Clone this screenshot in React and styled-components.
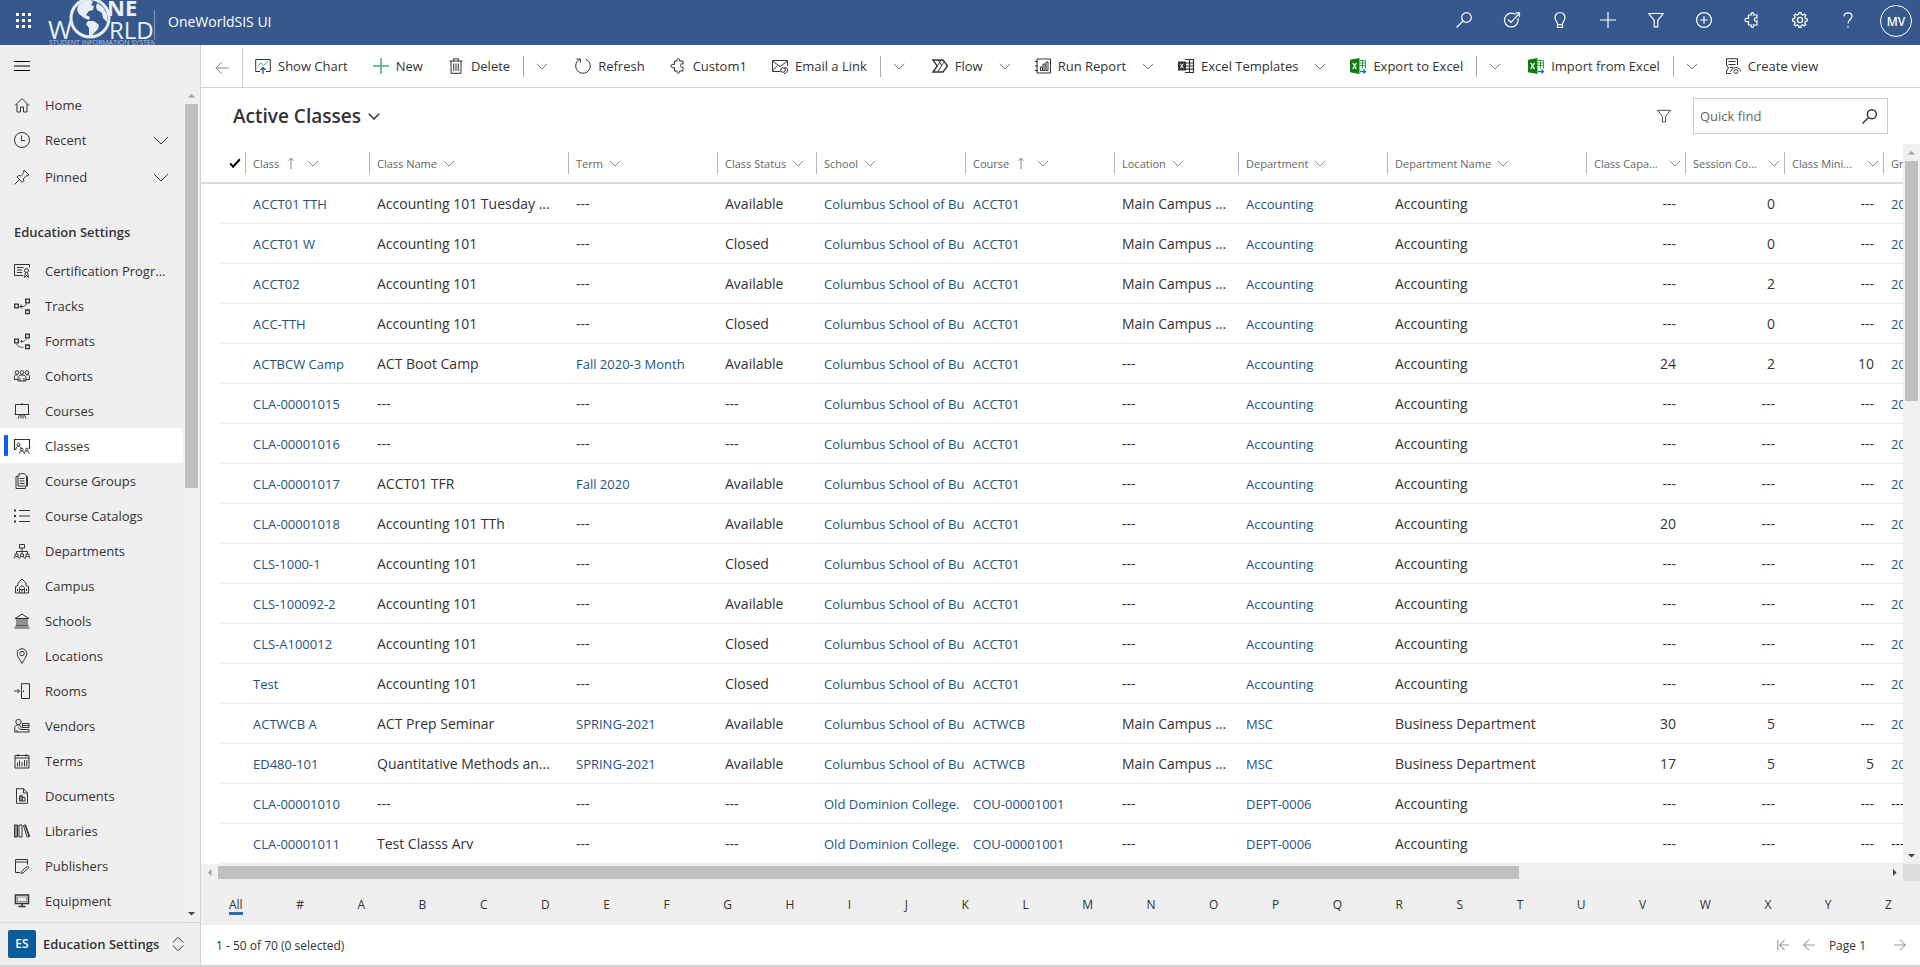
import React from "react";
import styled, { createGlobalStyle, css } from "styled-components";

const Global = createGlobalStyle`
  *, *::before, *::after { box-sizing: border-box; }
  html, body { margin: 0; height: 100%; }
  body {
    font-family: "Open Sans", "Noto Sans", sans-serif;
    font-size: 13px;
    color: #333;
    background: #fff;
  }
  #root { height: 100%; }
  button, input { font: inherit; color: inherit; }
  button { background: none; border: 0; padding: 0; cursor: pointer; }
  a { text-decoration: none; color: inherit; }
`;

/* ---------- icons ---------- */

const Svg = styled.svg`
  width: ${(p) => p.$size || 16}px;
  height: ${(p) => p.$size || 16}px;
  flex: none;
  fill: none;
  stroke: currentColor;
  stroke-width: ${(p) => p.$stroke || 1};
  overflow: visible;
`;

const shapes = {
  menu: <path d="M0 3.500h16M0 8h16M0 12.500h16" />,
  home: <path d="M1 8.500 8 1.500l7 7M3 7v8h3.500v-5h3v5H13V7" />,
  clock: <><circle cx="8" cy="8" r="7.500" /><path d="M7.500 3.500v5h3.500" /></>,
  pin: <path d="M10 1l5 5-1.500.8-1-.2-3 3 .2 2.400-1.400 1.400L3 8l1.400-1.400 2.400.2 3-3-.2-1zM5.500 10.500.5 15.500" />,
  certification: <><path d="M9 12.500H.5V1.500h15v3M3 4.500h6.500M3 7h5M3 9.500h5" /><circle cx="12.500" cy="7.500" r="2" /><path d="M11.500 9.500l-1 5 2-2 2 2-1-5" /></>,
  tracks: <><path d="M.7 6.200h3.600v3.600H.7zM11.700 1.200h3.600v3.600h-3.600zM11.700 12h3.600v3.600h-3.600z" strokeWidth="1.300" /><path d="M6 8.500h3.500c1.500 0 2-2 3.500-3M8 6.500l-2 2 2 2" /></>,
  formats: <><path d="M.7 6.200h3.600v3.600H.7zM11.700 1.200h3.600v3.600h-3.600zM11.700 12h3.600v3.600h-3.600z" strokeWidth="1.300" /><path d="M6.500 8.500h2.500c1.500 0 2-1.500 4-3M8 7l-1.500 1.500L8 10M2.500 11c1 2.500 3 3.500 7 3.300" strokeWidth=".8" /></>,
  cohorts: <><circle cx="3" cy="4.500" r="1.800" /><circle cx="8" cy="4.500" r="1.800" /><circle cx="13" cy="4.500" r="1.800" /><path d="M4 13V10c0-2 1.500-3 4-3s4 1 4 3v3zM.5 11.500V8.500C.5 7 1.500 6.700 4 6.800M15.500 11.500V8.500c0-1.500-1-1.800-3.500-1.700M.5 11.500H4M12 11.500h3.500M6 10v3M10 10v3" /></>,
  courses: <path d="M1.500 1.500h13v10h-13zM.5 11.500h15M8 0v1.500M5.500 12 4 15.500M10.500 12l1.500 3.500M7 12v3.500M9 12v3.500" />,
  classes: <><path d="M2 11.500H.5v-10h15v9.500" strokeWidth="1.200" /><circle cx="4.500" cy="6.500" r="1.500" /><path d="M2 11.500c0-2.500 1-3.500 2.500-3.500S7 9.500 7.500 11M5.500 15.500c0-1.800.8-2.700 2.200-2.700s2.300.9 2.300 2.700M10.500 15.500c0-1.800.8-2.700 2.200-2.700s2.300.9 2.300 2.700" /><circle cx="7.800" cy="11.500" r="1.300" /><circle cx="12.800" cy="11.500" r="1.300" /></>,
  groups: <><path d="M5 3.500V.7h5.500l2 2v9.800M3.500 3.500H2v12h9.500v-1.500M4 2.200v10.800h9.500V3.500" /><path d="M5.500 5.500h5M5.500 8h5M5.500 10.500h5" /></>,
  list: <><path d="M5 2.500h11M5 8h11M5 13.500h11" /><path d="M0 2.500h2M0 8h2M0 13.500h2" strokeWidth="2" /></>,
  departments: <><path d="M5.500 1.500h5v3.500h-5zM8 5v6M2.500 11V8.500h11V11" /><path d="M1 11h3v2.500H1zM6.500 11h3v2.500h-3zM12 11h3v2.500h-3zM0 15.500l1-2M5 15.500l-1-2M5.500 15.500l1-2M10.500 15.500l-1-2M11 15.500l1-2M16 15.500l-1-2" strokeWidth=".9" /></>,
  campus: <path d="M1.500 15V8.500L4 7.500V5l4-4 4 4v2.500l2.500 1V15zM5.500 15v-4.500C5.500 9 6.500 8 8 8s2.500 1 2.500 2.500V15M5.500 11.500h5M3.500 11v2M12.500 11v2M8 11.500V15" />,
  schools: <path d="M.5 15h15M1.500 13h13M1 5.500h14L8 1.200zM3 6v7M5 6v7M7 6v7M9 6v7M11 6v7M13 6v7" />,
  location: <><path d="M8 15.500C6 11.500 3.200 8.800 3.200 5.500a4.800 4.800 0 0 1 9.600 0C12.800 8.800 10 11.500 8 15.500z" /><circle cx="8" cy="5.500" r="2.200" /></>,
  rooms: <path d="M7.500.7h8v14.800h-8zM0 8h5.500M3.500 6l2 2-2 2M9.500 7.500v1.500" />,
  vendors: <><circle cx="4.500" cy="4" r="2.700" /><path d="M.8 14V9.500c0-1.500 1.200-2.500 3-2.500 1.500 0 2.200.7 3 2l1 1.500M.8 14H15v-2.500H6.500L4 9.500M8.500 5.500H15v4H8.500zM8.500 7.500H15M3 14v-2" /></>,
  calendar: <path d="M1 2.500h14v12.500H1zM1 5h14M4 1v2.500M12 1v2.500M3.500 9.500v4M5.500 7.500v6M8 9v4.500M10.500 7v6.500M12.800 7v6.500" />,
  document: <path d="M2.500.7h7L13.500 5v10.300h-11zM9.500.7V5h4M5.500 8h3v5h-3zM8.500 9.500h2.500V13H8.500M7 6.500V13" />,
  books: <path d="M.5 2h3v12h-3zM5 2h3v12H5zM2 2v12M9.500 2.500l2-.7 4.200 11.600-2.500.7zM11 2.200l4 11.500" />,
  publishers: <path d="M6 14.500H1.500v-11V1.500h12v5M1.500 4h12M13.500 8l1.500 1.500-6 5.500-2 .5.500-2.200z" />,
  equipment: <><path d="M1.500 2h13v8.500h-13z" strokeWidth="1.600" /><path d="M3.500 4h9v4.500h-9z" strokeWidth=".5" /><path d="M8 11v2.500M4.500 13.500h7" strokeWidth="1.500" /></>,
  chevron: <path d="M1 5l7 7 7-7" />,
  updown: <path d="M1 6l7-7 7 7M1 10l7 7 7-7" />,
  back: <path d="M16 8H1M8 1 1 8l7 7" />,
  forward: <path d="M0 8h15M8 1l7 7-7 7" />,
  first: <path d="M16 8H3.500M10 1.500 3.500 8l6.500 6.500M1 1v14" />,
  sort: <path d="M8 16V1.500M4.500 5 8 1.500 11.500 5" />,
  check: <path d="M1.500 8.500l4 4.500L14.500 3" />,
  search: <><circle cx="10.500" cy="5.500" r="4.800" /><path d="M7 9l-6.500 6.500" /></>,
  goal: <path d="M11.500 2.500A6.900 6.900 0 1 0 14 6.200M4 7.500l3 3L15.200 1.500M11.500.9h4v4" />,
  bulb: <path d="M5.500 12.500C5.500 9.500 3 8.500 3 5.500a5 5 0 0 1 10 0c0 3-2.500 4-2.500 7zM5.500 12.500v2.800h5v-2.800" />,
  plus: <path d="M8 0v16M0 8h16" />,
  filter: <path d="M.8 1.500h14.400L9.800 8.500v6.300H6.200V8.500z" />,
  circlePlus: <><circle cx="8" cy="8" r="7.400" /><path d="M8 4.300v7.400M4.300 8h7.400" /></>,
  puzzle: <path d="M4.500 3h2.700C6.500 1.500 7.200.7 8.300.7s1.800.8 1.200 2.300h3.500v3c-2-.7-2.500.4-2.500 1.500s.8 2.200 2.500 1.500v4H9.500c.6 1.500-.2 2.300-1.200 2.300S6.500 14.500 7.200 13H4.500V9.500c-2 .7-3.500 0-3.500-1.500s1.500-2.200 3.500-1.500z" />,
  gear: <><path d="M6.700 2.400 7 .6h2l.3 1.800 1.600.7 1.500-1.100 1.500 1.500-1.100 1.500.6 1.600 1.800.4v2l-1.800.3-.7 1.600 1.100 1.500-1.500 1.500-1.500-1.100-1.600.7L9 15.400H7l-.3-1.800-1.600-.7-1.500 1.100-1.500-1.500 1.100-1.500-.7-1.600L.6 9V7l1.800-.3.700-1.600L2 3.600 3.500 2l1.500 1.100z" /><circle cx="8" cy="8" r="2.600" /></>,
  help: <><path d="M4 4.500C4 2 5.700.8 8 .8s4 1.300 4 3.500c0 3-4 3.500-4 7.200" /><path d="M8 14v1.500" strokeWidth="1.400" /></>,
  chart: <><path d="M5 13.500H.7v-12h14.600v12H11" stroke="#333" /><path d="M2.500 8.500 6 5l2.500 2.500L13.500 3" stroke="#3fae78" /><path d="M8 16V9.500M5.500 12 8 9.500l2.500 2.500" stroke="#1d5d90" strokeWidth="1.300" /></>,
  trash: <path d="M1.500 3h13M5.500 3V.8h5V3M3 3v12.300h10V3M5.700 5.500v7.500M8 5.500v7.500M10.300 5.500v7.500" />,
  refresh: <path d="M5 1.300C2.300 2.500.7 4.900.7 8a7.300 7.300 0 1 0 10-6.800M1.500 1h3.800v3.800" />,
  email: <><path d="M15.500 8V2.500H.5v11h8M.5 3l7.500 5.500L15.500 3M.5 13l5-5.500" /><circle cx="11" cy="12" r="2.300" /><path d="M12.500 9.500c2.500 0 3 1 3 2.500s-1 3.500-3.500 3.500" /></>,
  flow: <><path d="M.8 2H11l4.500 6-4.500 6H.8l4.500-6z" strokeWidth="1.300" /><path d="M1.500 13.500 9 2.500M5.500 14l6-9.500M6 2l4 6" /></>,
  report: <path d="M2 1h13.500v14H2zM0 3.500h3M0 8h3M0 12.500h3M5.500 9h2v3.500h-2zM8 6h2v6.500H8zM11 4h2v8.500h-2z" />,
  excelTemplate: <><path d="M7 1.500h8.500v13H7M7 5h8.500M7 8h8.500M7 11.200h8.500M11.500 1.500v13" strokeWidth="1.200" /><path d="M0 3.500h8v9H0z" fill="#333" stroke="none" /><path d="M2.300 5.700l3 4.600M5.300 5.700l-3 4.600" stroke="#fff" /></>,
  excel: <><path d="M10 2.500h5.500v8M10 5h5.500M10 7.500h5.500M12.500 2.500v8" stroke="#3a9a4d" /><path d="M0 1.800 9.500 0v16L0 14.200z" fill="#107c10" stroke="none" /><path d="M2.800 5l3.600 6M6.400 5l-3.600 6" stroke="#fff" strokeWidth="1.400" /><path d="M10 13.500h5.500M13.500 11.500l2 2-2 2" stroke="#1e6fc0" strokeWidth="1.300" /></>,
  view: <><path d="M6 15.500H1.500V13l2-3-2-3V.7h11V7M3.500 3.500h7M3.500 6.500h7M5 9.500h3" /><path d="M5.500 14C7 10.500 9 9.500 11 9.500s4 1.500 4.700 4" /><circle cx="11" cy="13.500" r="2" /></>,
};

const Icon = ({ name, size, stroke }) => (
  <Svg viewBox="0 0 16 16" $size={size} $stroke={stroke} aria-hidden="true">
    {shapes[name]}
  </Svg>
);

/* ---------- shell ---------- */

const Shell = styled.div`
  height: 100vh;
  display: flex;
  flex-direction: column;
  border-bottom: 2px solid #cdd3d6;
  overflow: hidden;
`;

const TopBar = styled.header`
  flex: none;
  height: 45px;
  display: flex;
  align-items: center;
  background: #37588c;
  color: #fff;
  padding-right: 8px;
`;

const Waffle = styled.button`
  width: 48px;
  height: 44px;
  padding-bottom: 3px;
  display: grid;
  place-items: center;
`;

const Dots = styled.svg`
  width: 16px;
  height: 16px;
  fill: #fff;
`;

const Logo = styled.svg`
  width: 107px;
  height: 45px;
  flex: none;
  fill: #e8eef8;
`;

const AppName = styled.a`
  margin-left: 13px;
  padding-bottom: 2px;
  font-size: 14px;
  flex: 1;
`;

const TopButton = styled.button`
  width: 48px;
  height: 44px;
  padding-bottom: 5px;
  display: grid;
  place-items: center;
`;

const Avatar = styled.button`
  width: 32px;
  height: 32px;
  margin: 0 0 3px 8px;
  border: 1px solid #fff;
  border-radius: 50%;
  font-size: 12px;
  font-weight: 600;
`;

const Body = styled.div`
  flex: 1;
  min-height: 0;
  display: flex;
`;

/* ---------- sidebar ---------- */

const Sidebar = styled.nav`
  flex: none;
  width: 201px;
  background: #efefef;
  border-right: 1px solid #d2d2d2;
  display: flex;
  flex-direction: column;
`;

const Collapse = styled.button`
  width: 44px;
  height: 42px;
  color: #000;
  display: grid;
  place-items: center;
`;

const SideScroll = styled.div`
  flex: 1;
  min-height: 0;
  display: flex;
  justify-content: space-between;
`;

const SideList = styled.div`
  width: 184px;
  overflow: hidden;
`;

const sideRow = css`
  display: flex;
  align-items: center;
  width: 100%;
  height: ${(p) => p.$h || 35}px;
  padding: 0 14px;
  gap: 15px;
  text-align: left;
  white-space: nowrap;
`;

const SideLink = styled.a`
  ${sideRow}
  position: relative;
  background: ${(p) => (p.$active ? "#fff" : "transparent")};
  &::before {
    content: "";
    display: ${(p) => (p.$active ? "block" : "none")};
    position: absolute;
    left: 4px;
    top: 7px;
    bottom: 7px;
    width: 4px;
    border-radius: 1px;
    background: #0b5cf0;
  }
`;

const SideButton = styled.button`
  ${sideRow}
  span { flex: 1; }
`;

const SideHeading = styled.h2`
  margin: 19px 0 3px;
  padding-left: 14px;
  font-size: 13px;
  line-height: 36px;
  font-weight: 600;
`;

const AreaSwitch = styled.button`
  flex: none;
  height: 43px;
  border-top: 1px solid #d8d8d8;
  padding: 0 16px 0 8px;
  display: flex;
  align-items: center;
  gap: 7px;
  font-weight: 600;
  white-space: nowrap;
`;

const AreaTile = styled.span`
  flex: none;
  width: 28px;
  height: 28px;
  border-radius: 2px;
  background: #0c5a9e;
  color: #fff;
  font-size: 12px;
  line-height: 27px;
  text-align: center;
`;

const AreaName = styled.span`
  flex: 1;
  text-align: left;
`;

/* ---------- scroll bars ---------- */

const Track = styled.div`
  flex: none;
  display: flex;
  flex-direction: ${(p) => (p.$across ? "row" : "column")};
  background: #f0f0f0;
  ${(p) => (p.$across ? "height: 17px;" : "width: 17px;")}
`;

const Arrow = styled.svg`
  width: 17px;
  height: 17px;
  flex: none;
  fill: ${(p) => (p.$dim ? "#a0a0a0" : "#444")};
`;

const Thumb = styled.div`
  flex: ${(p) => p.$part} 1 0;
  background: #c0c0c0;
  margin: ${(p) => (p.$across ? "2px 0" : "0 2px")};
`;

const Rest = styled.div`
  flex: ${(p) => p.$part} 1 0;
`;

const arrows = {
  up: "M5 10.500h7L8.500 7z",
  down: "M5 7h7l-3.500 3.500z",
  left: "M10.500 5v7L7 8.500z",
  right: "M7 5v7l3.500-3.500z",
};

const ScrollBar = ({ across, part }) => (
  <Track $across={across} aria-hidden="true">
    <Arrow $dim viewBox="0 0 17 17"><path d={arrows[across ? "left" : "up"]} /></Arrow>
    <Thumb $across={across} $part={part} />
    <Rest $part={100 - part} />
    <Arrow viewBox="0 0 17 17"><path d={arrows[across ? "right" : "down"]} /></Arrow>
  </Track>
);

/* ---------- main ---------- */

const Main = styled.main`
  flex: 1;
  min-width: 0;
  display: flex;
  flex-direction: column;
`;

const CommandBar = styled.div`
  flex: none;
  height: 43px;
  border-bottom: 1px solid #d2d2d2;
  display: flex;
  align-items: stretch;
  white-space: nowrap;
`;

const BackButton = styled.button`
  width: 42px;
  margin-top: 3px;
  border-right: 1px solid #d2d2d2;
  color: #777;
  display: grid;
  place-items: center;
`;

const Command = styled.button`
  display: flex;
  align-items: center;
  gap: 7px;
  padding: 0 13px 0 12px;
  svg { color: ${(p) => p.$tint || "#333"}; }
`;

const More = styled.button`
  width: ${(p) => (p.$split ? 40 : 27)}px;
  padding-left: ${(p) => (p.$split ? 13 : 3)}px;
  display: grid;
  align-items: center;
  color: #777;
  position: relative;
  &::before {
    content: "";
    display: ${(p) => (p.$split ? "block" : "none")};
    position: absolute;
    left: 0;
    top: 11px;
    height: 21px;
    border-left: 1px solid #aaa;
  }
`;

const ViewBar = styled.div`
  flex: none;
  height: 56px;
  display: flex;
  align-items: center;
  justify-content: space-between;
  padding: 0 32px;
`;

const ViewTitle = styled.button`
  display: flex;
  align-items: center;
  gap: 7px;
  h1 {
    margin: 0;
    font-size: 19px;
    line-height: 26px;
    font-weight: 600;
  }
`;

const ViewTools = styled.div`
  display: flex;
  align-items: center;
  gap: 22px;
`;

const FilterButton = styled.button`
  display: grid;
  place-items: center;
`;

const SearchBox = styled.label`
  width: 195px;
  height: 36px;
  border: 1px solid #ccc;
  display: flex;
  align-items: center;
  padding: 0 10px 0 6px;
  input {
    flex: 1;
    min-width: 0;
    padding: 0;
    border: 0;
    outline: 0;
    background: none;
  }
  input::placeholder { color: #666; opacity: 1; }
`;

const GridArea = styled.section`
  flex: 1;
  min-height: 0;
  display: flex;
`;

const GridColumn = styled.div`
  flex: 1;
  min-width: 0;
  display: flex;
  flex-direction: column;
`;

const GridView = styled.div`
  flex: 1;
  min-height: 0;
  overflow: hidden;
`;

const Table = styled.table`
  width: 1705px;
  table-layout: fixed;
  border-collapse: separate;
  border-spacing: 0;
`;

const HeadCell = styled.th`
  height: 40px;
  padding: 0;
  border-bottom: 2px solid #dcdcdc;
  font-size: 11px;
  font-weight: 400;
  text-align: left;
  overflow: hidden;
  white-space: nowrap;
`;

const HeadInner = styled.button`
  width: 100%;
  height: 22px;
  border-left: 1px solid #b5b5b5;
  padding: 0 4px 0 7px;
  display: flex;
  align-items: center;
  gap: 6px;
  color: #666;
  ${(p) => p.$spread && "justify-content: space-between;"}
`;

const SortGap = styled.span`
  display: flex;
  gap: 10px;
  align-items: center;
`;

const CheckAll = styled.button`
  width: 100%;
  height: 22px;
  padding-right: 4px;
  display: flex;
  align-items: center;
  justify-content: flex-end;
  color: #000;
`;

const Cell = styled.td`
  height: 40px;
  padding: 0 ${(p) => (p.$num ? 9 : 0)}px 0 ${(p) => (p.$num ? 0 : 8)}px;
  border-bottom: ${(p) => (p.$bare ? 0 : 1)}px solid #ececec;
  font-size: 14px;
  text-align: ${(p) => (p.$num ? "right" : "left")};
  overflow: hidden;
  white-space: nowrap;
  a {
    font-size: 13px;
    color: #1d5480;
  }
`;

const Corner = styled.div`
  height: 17px;
  background: #dcdcdc;
`;

const VerticalBar = styled.div`
  display: flex;
  flex-direction: column;
  > :first-child { flex: 1; }
`;

const Letters = styled.div`
  flex: none;
  height: 44px;
  background: #efefef;
  display: flex;
  justify-content: space-between;
  align-items: center;
  padding: 0 28px;
  font-size: 12px;
`;

const Letter = styled.button`
  border-bottom: 3px solid ${(p) => (p.$on ? "#2f6cab" : "transparent")};
  line-height: 15px;
  padding-top: 6px;
`;

const Footer = styled.footer`
  flex: none;
  height: 40px;
  display: flex;
  align-items: center;
  justify-content: space-between;
  padding: 0 14px 0 15px;
  font-size: 12px;
`;

const Pager = styled.div`
  display: flex;
  align-items: center;
  gap: 14px;
  button { display: grid; color: #999; }
  button:last-child { margin-left: 14px; }
`;

/* ---------- data ---------- */

const sideItems = [
  ["certification", "Certification Progr..."],
  ["tracks", "Tracks"],
  ["formats", "Formats"],
  ["cohorts", "Cohorts"],
  ["courses", "Courses"],
  ["classes", "Classes"],
  ["groups", "Course Groups"],
  ["list", "Course Catalogs"],
  ["departments", "Departments"],
  ["campus", "Campus"],
  ["schools", "Schools"],
  ["location", "Locations"],
  ["rooms", "Rooms"],
  ["vendors", "Vendors"],
  ["calendar", "Terms"],
  ["document", "Documents"],
  ["books", "Libraries"],
  ["publishers", "Publishers"],
  ["equipment", "Equipment"],
];

const topIcons = [
  ["search", "Search"],
  ["goal", "Task flow"],
  ["bulb", "Assistant"],
  ["plus", "Quick create"],
  ["filter", "Advanced find"],
  ["circlePlus", "Add"],
  ["puzzle", "Custom tools"],
  ["gear", "Settings"],
  ["help", "Help"],
];

const commands = [
  { icon: "chart", text: "Show Chart" },
  { icon: "plus", text: "New", tint: "#3fae78", stroke: 1.5 },
  { icon: "trash", text: "Delete", more: "split" },
  { icon: "refresh", text: "Refresh" },
  { icon: "puzzle", text: "Custom1" },
  { icon: "email", text: "Email a Link", more: "split" },
  { icon: "flow", text: "Flow", more: "menu" },
  { icon: "report", text: "Run Report", more: "menu" },
  { icon: "excelTemplate", text: "Excel Templates", more: "menu" },
  { icon: "excel", text: "Export to Excel", more: "split" },
  { icon: "excel", text: "Import from Excel", more: "split" },
  { icon: "view", text: "Create view" },
];

const columns = [
  { name: "Class", w: 124, link: true, sorted: true },
  { name: "Class Name", w: 199 },
  { name: "Term", w: 149, link: true },
  { name: "Class Status", w: 99 },
  { name: "School", w: 149, link: true },
  { name: "Course", w: 149, link: true, sorted: true },
  { name: "Location", w: 124 },
  { name: "Department", w: 149, link: true },
  { name: "Department Name", w: 199 },
  { name: "Class Capa...", w: 99, num: true },
  { name: "Session Co...", w: 99, num: true },
  { name: "Class Mini...", w: 99, num: true },
  { name: "Gr", w: 23, link: true },
];

const CSB = "Columbus School of Bu";
const ODC = "Old Dominion College.";
const MC = "Main Campus ...";
const N = "---";
const ACC = "Accounting";
const BD = "Business Department";
const G = "20";

const rows = [
  ["ACCT01 TTH", "Accounting 101 Tuesday ...", N, "Available", CSB, "ACCT01", MC, ACC, ACC, N, "0", N, G],
  ["ACCT01 W", "Accounting 101", N, "Closed", CSB, "ACCT01", MC, ACC, ACC, N, "0", N, G],
  ["ACCT02", "Accounting 101", N, "Available", CSB, "ACCT01", MC, ACC, ACC, N, "2", N, G],
  ["ACC-TTH", "Accounting 101", N, "Closed", CSB, "ACCT01", MC, ACC, ACC, N, "0", N, G],
  ["ACTBCW Camp", "ACT Boot Camp", "Fall 2020-3 Month", "Available", CSB, "ACCT01", N, ACC, ACC, "24", "2", "10", G],
  ["CLA-00001015", N, N, N, CSB, "ACCT01", N, ACC, ACC, N, N, N, G],
  ["CLA-00001016", N, N, N, CSB, "ACCT01", N, ACC, ACC, N, N, N, G],
  ["CLA-00001017", "ACCT01 TFR", "Fall 2020", "Available", CSB, "ACCT01", N, ACC, ACC, N, N, N, G],
  ["CLA-00001018", "Accounting 101 TTh", N, "Available", CSB, "ACCT01", N, ACC, ACC, "20", N, N, G],
  ["CLS-1000-1", "Accounting 101", N, "Closed", CSB, "ACCT01", N, ACC, ACC, N, N, N, G],
  ["CLS-100092-2", "Accounting 101", N, "Available", CSB, "ACCT01", N, ACC, ACC, N, N, N, G],
  ["CLS-A100012", "Accounting 101", N, "Closed", CSB, "ACCT01", N, ACC, ACC, N, N, N, G],
  ["Test", "Accounting 101", N, "Closed", CSB, "ACCT01", N, ACC, ACC, N, N, N, G],
  ["ACTWCB A", "ACT Prep Seminar", "SPRING-2021", "Available", CSB, "ACTWCB", MC, "MSC", BD, "30", "5", N, G],
  ["ED480-101", "Quantitative Methods an...", "SPRING-2021", "Available", CSB, "ACTWCB", MC, "MSC", BD, "17", "5", "5", G],
  ["CLA-00001010", N, N, N, ODC, "COU-00001001", N, "DEPT-0006", ACC, N, N, N, N],
  ["CLA-00001011", "Test Classs Arv", N, N, ODC, "COU-00001001", N, "DEPT-0006", ACC, N, N, N, N],
];

const letters = ["All", "#", ..."ABCDEFGHIJKLMNOPQRSTUVWXYZ"];

/* ---------- parts ---------- */

const BrandLogo = () => (
  <Logo viewBox="48 0 107 45" role="img" aria-label="One World student information system">
    <circle cx="90" cy="18" r="19" fill="none" stroke="#e8eef8" strokeWidth="3" />
    <path d="M78 6c3-4 8-6 12-6l3 2-2 3 3 1-1 4-4 1-3 4 4 2-1 3-5-2-5-4-2-4z" />
    <path d="M88 21l6 0 5 4-1 4-5 5-2 3-2-1 0-8-3-4z" />
    <path d="M97 3l6 4 4 7 0 8-4-4-1-5-5-3-1-3z" />
    <text x="48" y="39" fontSize="26" fontFamily="Open Sans" fontWeight="400">W</text>
    <text x="109" y="39" fontSize="24" fontFamily="Open Sans" fontWeight="400">RLD</text>
    <text x="107" y="16" fontSize="22" fontFamily="Open Sans" fontWeight="700">NE</text>
    <text x="49" y="45" fontSize="7" fontFamily="Open Sans" fontWeight="400" fill="#b5c5e0">STUDENT INFORMATION SYSTEM</text>
    <path d="M154 10h1v30h-1z" fill="#7f97bd" />
  </Logo>
);

const TopHeader = () => (
  <TopBar>
    <Waffle aria-label="App launcher">
      <Dots viewBox="0 0 16 16">
        {[0, 6, 12].map((y) => [0, 6, 12].map((x) => <rect key={`${x}-${y}`} x={x} y={y} width="3" height="3" />))}
      </Dots>
    </Waffle>
    <BrandLogo />
    <AppName href="#app">OneWorldSIS UI</AppName>
    {topIcons.map(([icon, label]) => (
      <TopButton key={icon} aria-label={label}><Icon name={icon} stroke={1.2} /></TopButton>
    ))}
    <Avatar>MV</Avatar>
  </TopBar>
);

const SideNav = () => (
  <Sidebar>
    <Collapse aria-label="Toggle navigation"><Icon name="menu" stroke={1.2} /></Collapse>
    <SideScroll>
      <SideList>
        <SideLink href="#home"><Icon name="home" />Home</SideLink>
        <SideButton $h={36}><Icon name="clock" /><span>Recent</span><Icon name="chevron" /></SideButton>
        <SideButton $h={37}><Icon name="pin" /><span>Pinned</span><Icon name="chevron" /></SideButton>
        <SideHeading>Education Settings</SideHeading>
        {sideItems.map(([icon, text]) => (
          <SideLink key={text} href={`#${icon}`} $active={icon === "classes"}>
            <Icon name={icon} />{text}
          </SideLink>
        ))}
      </SideList>
      <ScrollBar part={48} />
    </SideScroll>
    <AreaSwitch>
      <AreaTile>ES</AreaTile>
      <AreaName>Education Settings</AreaName>
      <Icon name="updown" size={12} stroke={1.3} />
    </AreaSwitch>
  </Sidebar>
);

const Commands = () => (
  <CommandBar>
    <BackButton aria-label="Back"><Icon name="back" size={14} /></BackButton>
    {commands.map((c) => (
      <React.Fragment key={c.text}>
        <Command $tint={c.tint}><Icon name={c.icon} stroke={c.stroke} />{c.text}</Command>
        {c.more && <More $split={c.more === "split"} aria-label={`More for ${c.text}`}><Icon name="chevron" size={12} stroke={1.3} /></More>}
      </React.Fragment>
    ))}
  </CommandBar>
);

const ClassGrid = () => (
  <Table>
    <colgroup>
      <col style={{ width: 19 }} />
      <col style={{ width: 25 }} />
      {columns.map((c) => <col key={c.name} style={{ width: c.w }} />)}
    </colgroup>
    <thead>
      <tr>
        <HeadCell />
        <HeadCell><CheckAll aria-label="Select all"><Icon name="check" size={12} stroke={2.600} /></CheckAll></HeadCell>
        {columns.map((c) => (
          <HeadCell key={c.name} scope="col">
            <HeadInner $spread={c.num}>
              {c.name}
              {c.sorted && <SortGap><Icon name="sort" size={12} /><Icon name="chevron" size={12} /></SortGap>}
              {!c.sorted && c.name !== "Gr" && <Icon name="chevron" size={12} />}
            </HeadInner>
          </HeadCell>
        ))}
      </tr>
    </thead>
    <tbody>
      {rows.map((row) => (
        <tr key={row[0]}>
          <Cell $bare />
          <Cell />
          {row.map((value, i) => (
            <Cell key={columns[i].name} $num={columns[i].num}>
              {columns[i].link && value !== N ? <a href="#record">{value}</a> : value}
            </Cell>
          ))}
        </tr>
      ))}
    </tbody>
  </Table>
);

export default function App() {
  return (
    <Shell>
      <Global />
      <TopHeader />
      <Body>
        <SideNav />
        <Main>
          <Commands />
          <ViewBar>
            <ViewTitle><h1>Active Classes</h1><Icon name="chevron" size={12} stroke={2} /></ViewTitle>
            <ViewTools>
              <FilterButton aria-label="Filter"><Icon name="filter" size={14} /></FilterButton>
              <SearchBox>
                <input type="text" placeholder="Quick find" aria-label="Quick find" />
                <Icon name="search" size={15} stroke={1.6} />
              </SearchBox>
            </ViewTools>
          </ViewBar>
          <GridArea>
            <GridColumn>
              <GridView><ClassGrid /></GridView>
              <ScrollBar across part={78} />
            </GridColumn>
            <VerticalBar>
              <ScrollBar part={35} />
              <Corner />
            </VerticalBar>
          </GridArea>
          <Letters>
            {letters.map((l) => <Letter key={l} $on={l === "All"}>{l}</Letter>)}
          </Letters>
          <Footer>
            <span>1 - 50 of 70 (0 selected)</span>
            <Pager>
              <button aria-label="First page"><Icon name="first" size={12} stroke={1.4} /></button>
              <button aria-label="Previous page"><Icon name="back" size={12} stroke={1.4} /></button>
              <span>Page 1</span>
              <button aria-label="Next page"><Icon name="forward" size={12} stroke={1.4} /></button>
            </Pager>
          </Footer>
        </Main>
      </Body>
    </Shell>
  );
}
